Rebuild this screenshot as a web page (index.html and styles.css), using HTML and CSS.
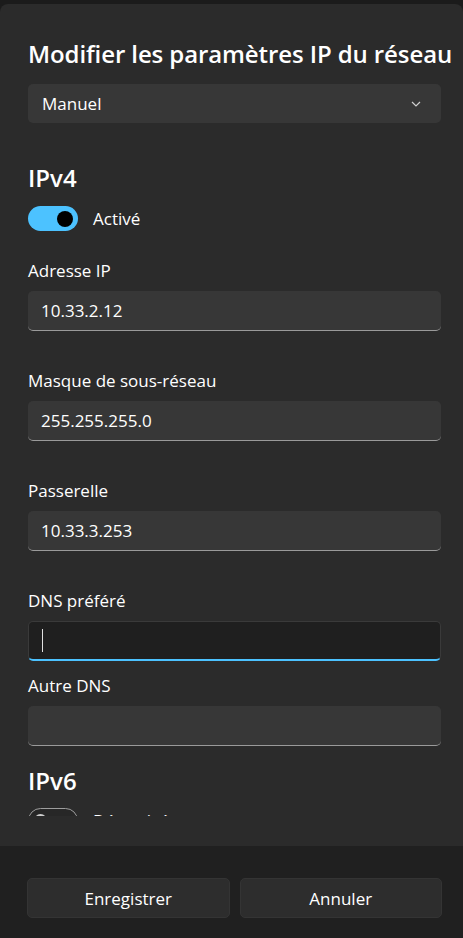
FILE: index.html
```html
<!DOCTYPE html>
<html lang="fr">
<head>
<meta charset="utf-8">
<title>Modifier les paramètres IP du réseau</title>
<link rel="stylesheet" href="styles.css">
</head>
<body>
<div class="dialog">
  <div class="scroll">
    <h1 class="title">Modifier les paramètres IP du réseau</h1>
    <div class="select">
      <span>Manuel</span>
      <svg class="chev" width="10" height="6" viewBox="0 0 10 6"><path d="M1 1 L5 5 L9 1" fill="none" stroke="#cfcfcf" stroke-width="1.2"/></svg>
    </div>

    <h2 class="section">IPv4</h2>
    <div class="toggle-row">
      <span class="toggle on"><span class="knob"></span></span>
      <span class="toggle-label">Activé</span>
    </div>

    <div class="field">
      <div class="label">Adresse IP</div>
      <div class="input">10.33.2.12</div>
    </div>
    <div class="field">
      <div class="label">Masque de sous-réseau</div>
      <div class="input">255.255.255.0</div>
    </div>
    <div class="field">
      <div class="label">Passerelle</div>
      <div class="input">10.33.3.253</div>
    </div>
    <div class="field tight">
      <div class="label">DNS préféré</div>
      <div class="input focused"><span class="caret"></span></div>
    </div>
    <div class="field">
      <div class="label">Autre DNS</div>
      <div class="input empty"></div>
    </div>

    <h2 class="section v6">IPv6</h2>
    <div class="toggle-row v6row">
      <span class="toggle off"><span class="knob"></span></span>
      <span class="toggle-label">Désactivé</span>
    </div>
  </div>
  <div class="footer">
    <button class="btn">Enregistrer</button>
    <button class="btn">Annuler</button>
  </div>
</div>
</body>
</html>
```

FILE: styles.css
```css
* { box-sizing: border-box; }
html, body { margin: 0; padding: 0; }
body {
  background: #1b1b1b;
  font-family: "Open Sans", "Noto Sans", sans-serif;
  color: #ffffff;
  width: 463px;
  height: 938px;
  overflow: hidden;
}
.dialog {
  margin-top: 4px;
  height: 934px;
  background: #2b2b2b;
  border-radius: 8px 8px 0 0;
  display: flex;
  flex-direction: column;
}
.scroll {
  height: 812px;
  flex: none;
  overflow: hidden;
  padding: 34px 22px 0 28px;
}
.title {
  margin: 0;
  font-size: 24px;
  font-weight: 600;
  line-height: 32px;
  letter-spacing: -0.1px;
  white-space: nowrap;
}
.select {
  margin-top: 14px;
  height: 39px;
  background: #373737;
  border-radius: 5px;
  display: flex;
  align-items: center;
  justify-content: space-between;
  padding: 0 20px 0 14px;
  font-size: 17px;
}
.section {
  margin: 39px 0 0;
  font-size: 24px;
  font-weight: 600;
  line-height: 32px;
}
.section.v6 { margin-top: 19px; }
.toggle-row {
  margin-top: 12px;
  display: flex;
  align-items: center;
  gap: 15px;
  height: 25px;
}
.toggle-row.v6row { margin-top: 11px; }
.toggle {
  width: 50px;
  height: 25px;
  border-radius: 13px;
  display: flex;
  align-items: center;
  padding: 0 5px;
  flex: none;
}
.toggle.on { background: #4cc2ff; justify-content: flex-end; }
.toggle.on .knob { width: 16px; height: 16px; border-radius: 50%; background: #000; }
.toggle.off { border: 1.5px solid #9d9d9d; background: #272727; }
.toggle.off .knob { width: 13px; height: 13px; border-radius: 50%; background: #cfcfcf; }
.toggle-label { font-size: 17px; }
.field { margin-top: 28px; }
.field + .field { margin-top: 38px; }
.field.tight + .field { margin-top: 13px; }
.label {
  font-size: 17px;
  line-height: 24px;
  margin-bottom: 8px;
}
.input {
  height: 40px;
  background: #373737;
  border-radius: 5px;
  border-bottom: 1px solid #9a9a9a;
  padding: 0 13px;
  display: flex;
  align-items: center;
  font-size: 17px;
}
.input.focused {
  background: #1f1f1f;
  border: 1px solid #3a3a3a;
  border-bottom: 2px solid #4cc2ff;
}
.caret {
  width: 1px;
  height: 23px;
  background: #e0e0e0;
}
.footer {
  margin-top: 30px;
  flex: 1;
  background: #202020;
  display: grid;
  grid-template-columns: 1fr 1fr;
  gap: 10px;
  padding: 32px 21px 0 27px;
  align-content: start;
}
.btn {
  height: 40px;
  background: #2d2d2d;
  border: 1px solid #343434;
  border-radius: 5px;
  color: #ffffff;
  font-family: inherit;
  font-size: 17px;
}
```
